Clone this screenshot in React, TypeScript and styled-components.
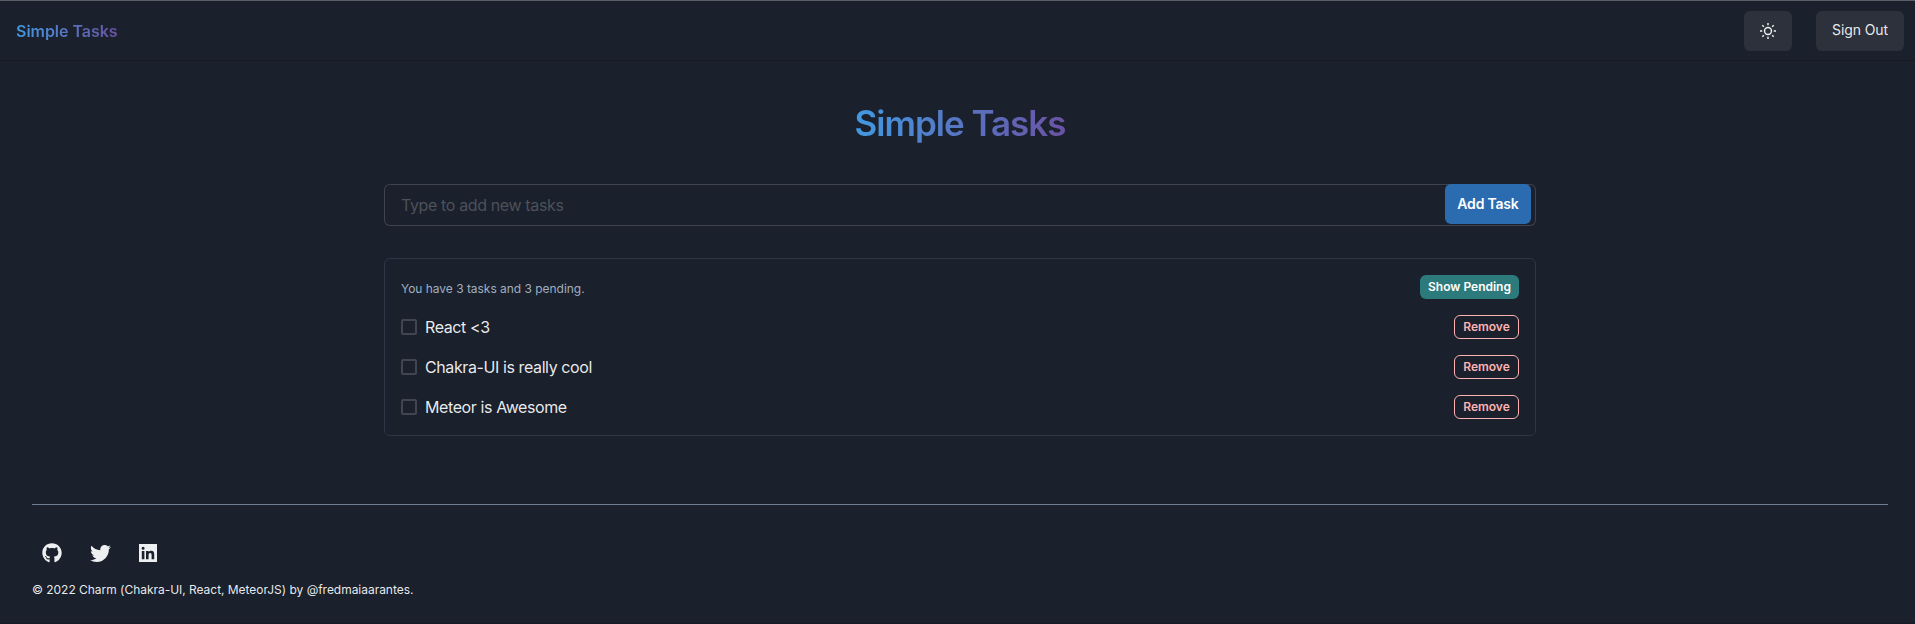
import React from 'react';
import styled, { createGlobalStyle, css } from 'styled-components';
import { FaGithub, FaTwitter } from 'react-icons/fa';

const GlobalStyle = createGlobalStyle`
  *, *::before, *::after { box-sizing: border-box; }
  body {
    margin: 0;
    background: #1a202c;
    color: rgba(255, 255, 255, 0.92);
    font-family: Inter, "Liberation Sans", sans-serif;
    font-size: 16px;
    line-height: 24px;
  }
  button, input { font: inherit; color: inherit; margin: 0; }
`;

const Page = styled.div`
  display: flex;
  flex-direction: column;
  height: 624px;
  border-top: 1px solid #5c6066;
  border-bottom: 1px solid #171923;
`;

const gradientText = css`
  background: linear-gradient(to right, #4299e1, #6b52a4);
  -webkit-background-clip: text;
  background-clip: text;
  color: transparent;
  font-weight: 600;
`;

const Header = styled.header`
  display: flex;
  align-items: center;
  justify-content: space-between;
  height: 60px;
  padding: 0 11px 0 16px;
  border-bottom: 1px solid #171923;
`;

const Brand = styled.span`
  ${gradientText}
  letter-spacing: -0.03px;
`;

const HeaderActions = styled.div`
  display: flex;
  gap: 24px;
`;

const HeaderButton = styled.button<{ $width: number }>`
  display: flex;
  align-items: center;
  justify-content: center;
  width: ${({ $width }) => $width}px;
  height: 40px;
  padding: 0 0 1px;
  border: 0;
  border-radius: 6px;
  background: #2c313c;
  font-size: 14px;
  line-height: 20px;
  letter-spacing: -0.1px;
`;

const SunIcon = styled.svg`
  width: 16px;
  height: 16px;
  margin-top: 1px;
`;

const Main = styled.main`
  display: flex;
  flex-direction: column;
  width: 1152px;
  margin-left: 384px;
`;

const Title = styled.h1`
  ${gradientText}
  align-self: center;
  margin: 40px 0 0;
  font-size: 35px;
  line-height: 44px;
  letter-spacing: -1px;
`;

const TaskForm = styled.form`
  display: flex;
  align-items: flex-start;
  height: 42px;
  margin-top: 39px;
  padding-right: 5px;
  border-radius: 6px;
  box-shadow: inset 0 0 0 1px #3e434d;
`;

const TaskInput = styled.input`
  flex: 1;
  height: 42px;
  padding: 0 17px;
  border: 0;
  outline: 0;
  background: none;
  letter-spacing: -0.37px;
  &::placeholder { color: #4c515a; opacity: 1; }
`;

const AddButton = styled.button`
  width: 86px;
  height: 40px;
  padding: 0;
  border: 0;
  border-radius: 6px;
  background: #2b6cb0;
  color: #fff;
  font-size: 14px;
  font-weight: 600;
  letter-spacing: -0.2px;
`;

const TaskPanel = styled.section`
  height: 178px;
  margin-top: 32px;
  padding: 16px;
  border: 1px solid #2d3748;
  border-radius: 6px;
`;

const Row = styled.div`
  display: flex;
  align-items: center;
  justify-content: space-between;
  height: 24px;
  & + & { margin-top: 16px; }
`;

const Summary = styled.span`
  padding-top: 4px;
  color: #a0aec0;
  font-size: 12px;
  letter-spacing: -0.03px;
`;

const SmallButton = styled.button<{ $outline?: boolean }>`
  width: ${({ $outline }) => ($outline ? 65 : 99)}px;
  height: 24px;
  padding: 0 0 1px;
  border: ${({ $outline }) => ($outline ? '1px solid #feb2b2' : '0')};
  border-radius: 6px;
  background: ${({ $outline }) => ($outline ? 'transparent' : '#2c7a7b')};
  color: ${({ $outline }) => ($outline ? '#feb2b2' : '#fff')};
  font-size: 12px;
  font-weight: 600;
  line-height: 20px;
`;

const TaskLabel = styled.label`
  display: flex;
  align-items: center;
  gap: 8px;
  letter-spacing: -0.4px;
`;

const Checkbox = styled.input.attrs({ type: 'checkbox' })`
  appearance: none;
  width: 16px;
  height: 16px;
  border: 2px solid #40454f;
  border-radius: 2px;
`;

const Footer = styled.footer`
  margin: 68px 27px 0 32px;
  border-top: 1px solid #718096;
`;

const SocialLinks = styled.nav`
  display: flex;
  gap: 28px;
  margin-top: 38px;
  padding-left: 10px;
`;

const SocialLink = styled.a`
  display: flex;
  align-items: center;
  justify-content: center;
  width: 20px;
  height: 20px;
  color: #eeeff0;
  svg { flex: none; }
`;

const Copyright = styled.p`
  margin: 15px 0 0;
  font-size: 12px;
  line-height: 24px;
  letter-spacing: -0.03px;
`;

const LinkedinIcon = () => (
  <svg width="18" height="18" viewBox="0 0 18 18" fill="currentColor" fillRule="evenodd">
    <path d="M0 0h18v18H0zM2.8 6.9v8.3h2.6V6.9zM4.1 2.7a1.5 1.5 0 1 0 0 3a1.5 1.5 0 1 0 0-3zM7 6.9v8.3h2.6v-4.1c0-1.1.3-2.1 1.6-2.1s1.4 1.2 1.4 2.2v4h2.6v-4.6c0-2.2-.5-3.9-3.1-3.9c-1.3 0-2.1.7-2.5 1.3V6.9z" />
  </svg>
);

const tasks = ['React <3', 'Chakra-UI is really cool', 'Meteor is Awesome'];

export default function App() {
  return (
    <>
      <GlobalStyle />
      <Page>
        <Header>
          <Brand>Simple Tasks</Brand>
          <HeaderActions>
            <HeaderButton $width={48} aria-label="Toggle color mode">
              <SunIcon viewBox="0 0 24 24" fill="none" stroke="currentColor" strokeWidth="2.2">
                <circle cx="12" cy="12" r="5.2" />
                <path d="M12 0v3.4M12 20.6V24M0 12h3.4M20.6 12H24M3.5 3.5l2.2 2.2M18.3 18.3l2.2 2.2M3.5 20.5l2.2-2.2M18.3 5.7l2.2-2.2" />
              </SunIcon>
            </HeaderButton>
            <HeaderButton $width={88}>Sign Out</HeaderButton>
          </HeaderActions>
        </Header>
        <Main>
          <Title>Simple Tasks</Title>
          <TaskForm onSubmit={(event) => event.preventDefault()}>
            <TaskInput placeholder="Type to add new tasks" />
            <AddButton>Add Task</AddButton>
          </TaskForm>
          <TaskPanel>
            <Row>
              <Summary>You have 3 tasks and 3 pending.</Summary>
              <SmallButton>Show Pending</SmallButton>
            </Row>
            {tasks.map((task) => (
              <Row key={task}>
                <TaskLabel>
                  <Checkbox />
                  {task}
                </TaskLabel>
                <SmallButton $outline>Remove</SmallButton>
              </Row>
            ))}
          </TaskPanel>
        </Main>
        <Footer>
          <SocialLinks>
            <SocialLink aria-label="GitHub"><FaGithub size={20} /></SocialLink>
            <SocialLink aria-label="Twitter"><FaTwitter size={21} /></SocialLink>
            <SocialLink aria-label="LinkedIn"><LinkedinIcon /></SocialLink>
          </SocialLinks>
          <Copyright>© 2022 Charm (Chakra-UI, React, MeteorJS) by @fredmaiaarantes.</Copyright>
        </Footer>
      </Page>
    </>
  );
}
